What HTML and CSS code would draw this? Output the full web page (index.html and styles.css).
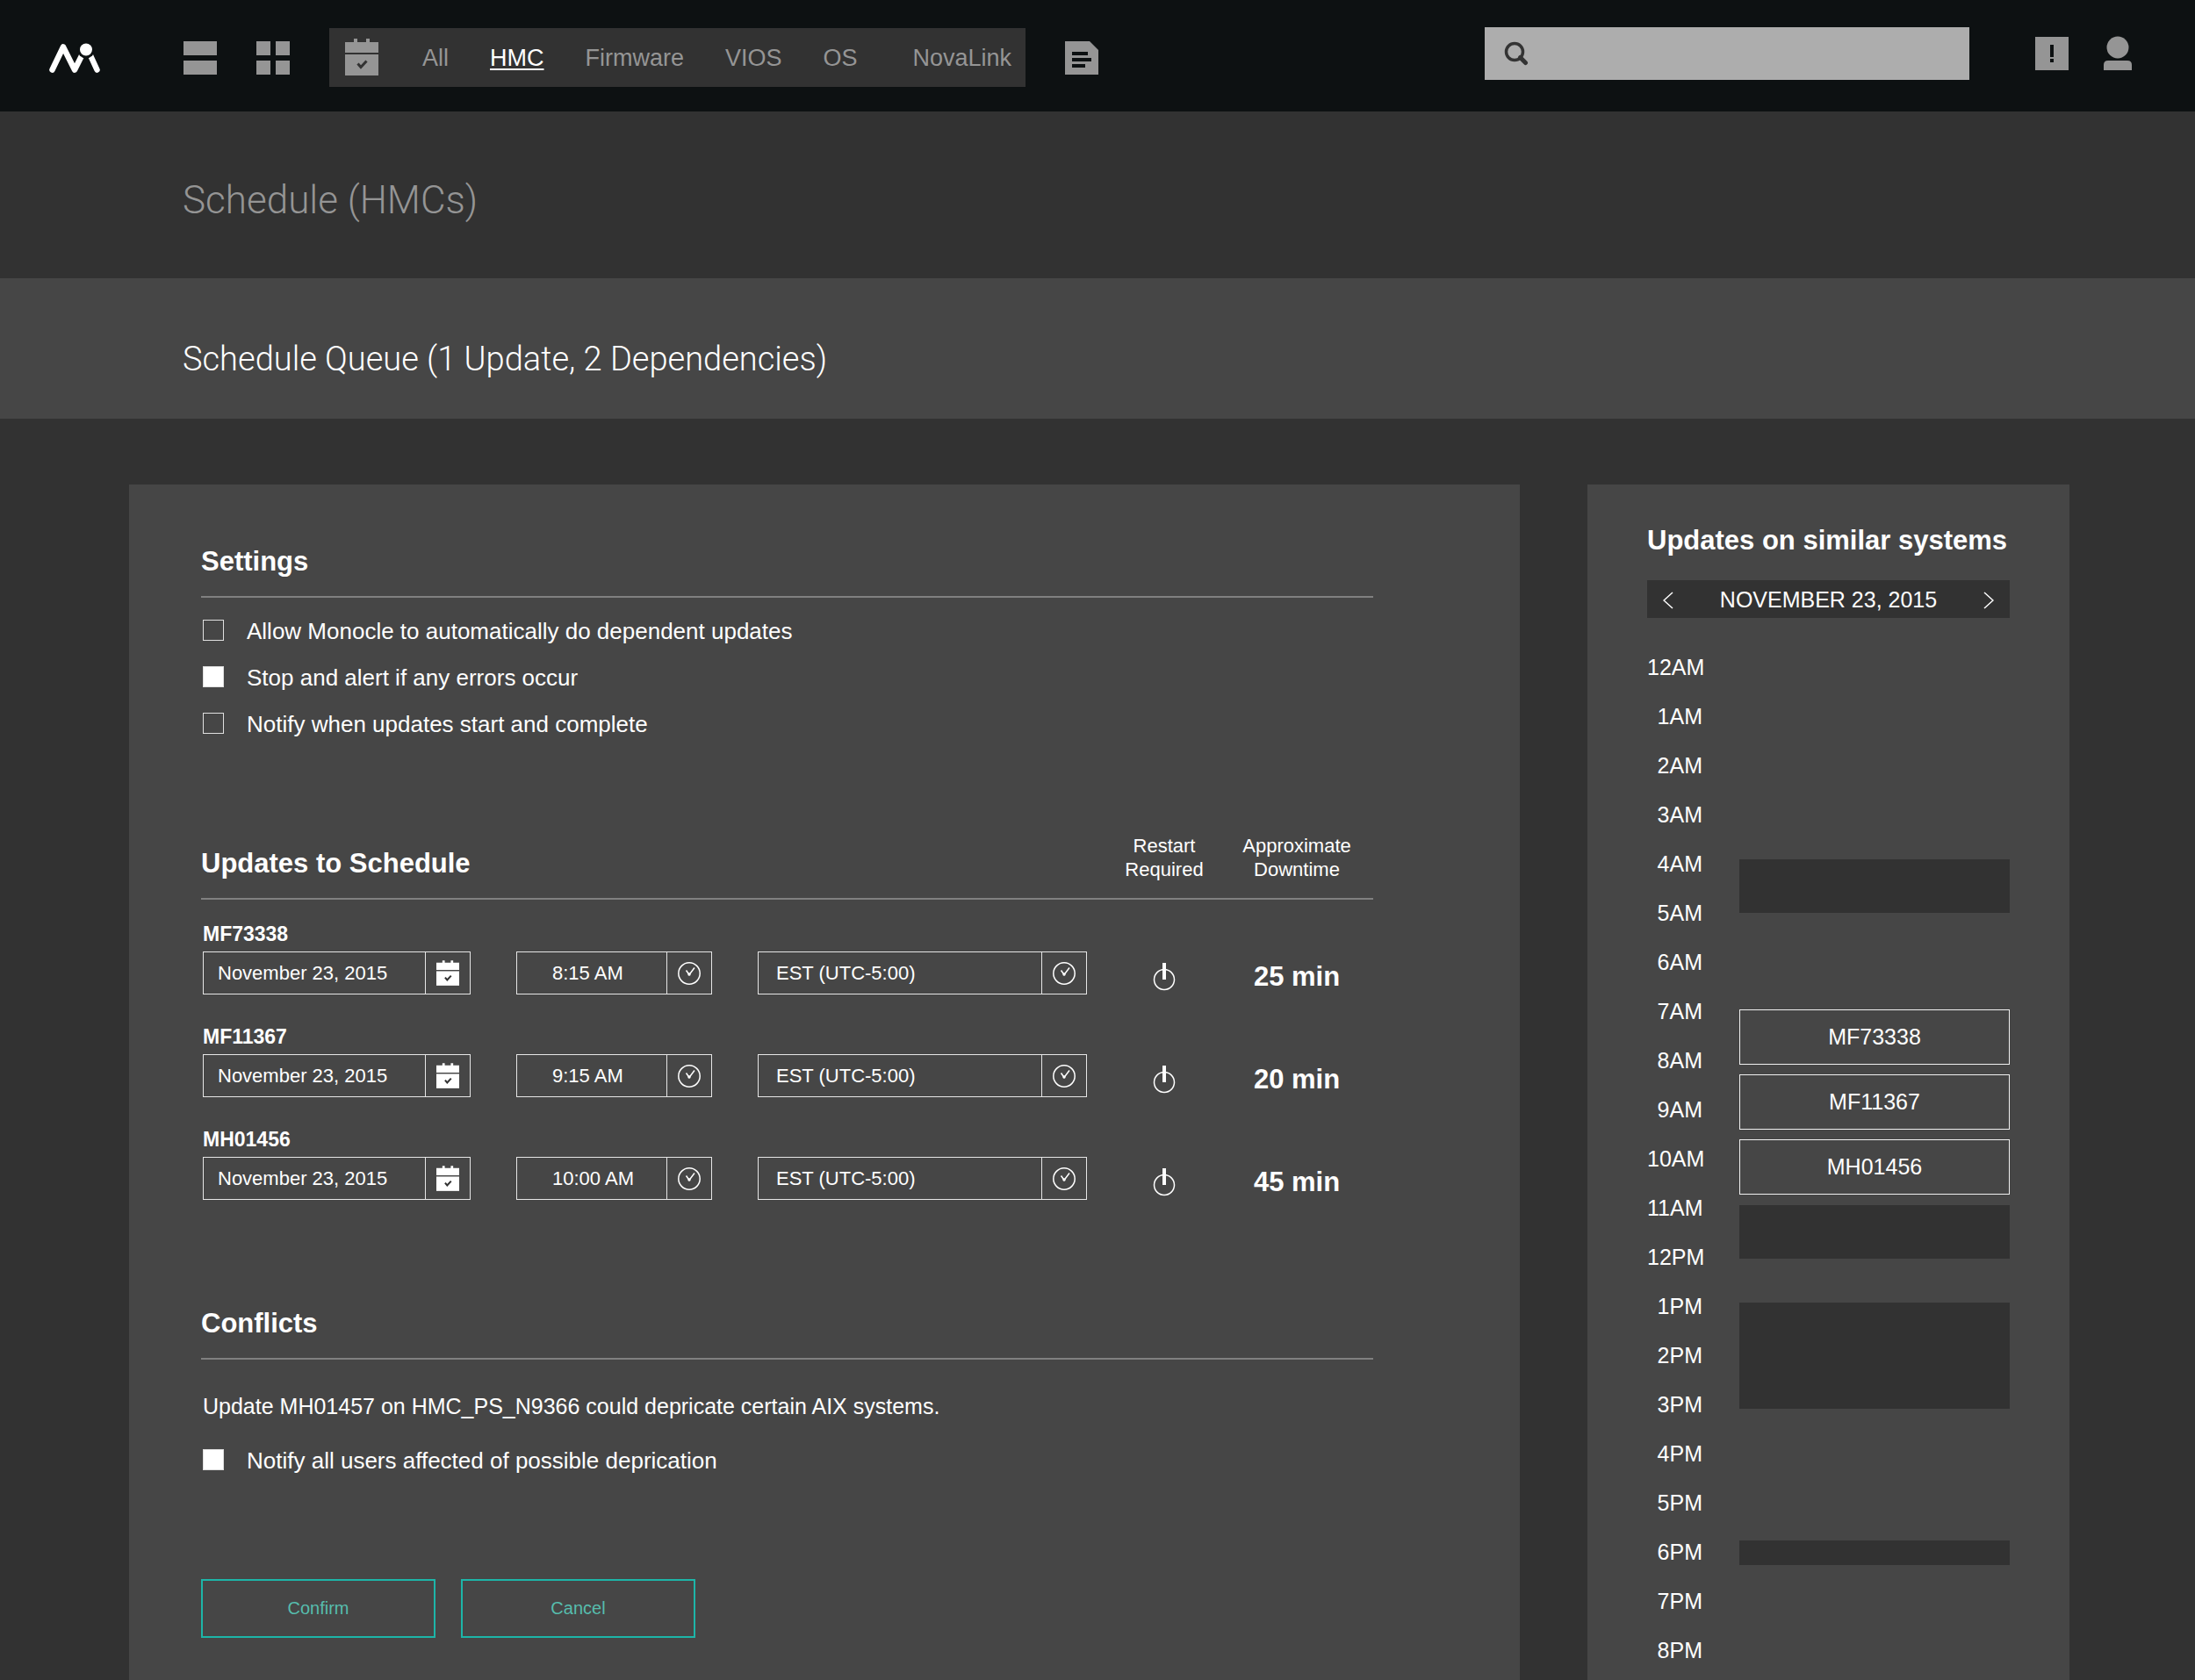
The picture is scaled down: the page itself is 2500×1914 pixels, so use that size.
FILE: index.html
```html
<!DOCTYPE html>
<html lang="en">

<head>
    <meta charset="UTF-8">
    <meta name="viewport" content="width=device-width, initial-scale=1.0">
    <title>Monocle - Schedule (HMCs)</title>
    <link rel="stylesheet" href="styles.css">
</head>

<body>
    <!-- shared icons -->
    <svg class="sprite" aria-hidden="true">
        <symbol id="calendar" viewBox="0 0 38 42">
            <path fill="currentColor" d="M0 4h10V0h4v4h10V0h4v4h10v12H0z" />
            <path fill="currentColor" d="M0 18h38v24H0z" />
            <path class="tick" d="M14.500 28.500l3.500 4 6.500-7" />
        </symbol>
        <symbol id="clock" viewBox="0 0 26 26">
            <circle cx="13" cy="13" r="12.200" fill="none" stroke="currentColor" stroke-width="1.500" />
            <path d="M9.500 9.500l3.500 5 6-8" fill="none" stroke="currentColor" stroke-width="1.500" />
            <circle cx="13" cy="14" r="1.700" fill="currentColor" />
        </symbol>
        <symbol id="power" viewBox="0 0 26 32">
            <circle cx="13" cy="19" r="11.500" fill="none" stroke="currentColor" stroke-width="1.500" />
            <path d="M11 0h4v19h-4z" fill="currentColor" />
        </symbol>
    </svg>

    <header class="topbar">
        <a class="logo" href="#" aria-label="Monocle">
            <svg width="58" height="34" viewBox="0 0 58 34" fill="none" stroke="#fff" stroke-width="6.500" stroke-linecap="round" stroke-linejoin="round">
                <path d="M3.500 30.500L16 4.500l13 26 8-16M46 12l8.500 18.500" />
                <circle cx="42" cy="7.500" r="10" fill="#0d1112" stroke="none" />
                <circle cx="42" cy="7.500" r="7" fill="#fff" stroke="none" />
            </svg>
        </a>
        <nav class="nav">
            <a href="#" aria-label="List">
                <svg width="38" height="38" fill="currentColor"><path d="M0 0h38v16H0zM0 22h38v16H0z" /></svg>
            </a>
            <a href="#" aria-label="Grid">
                <svg width="38" height="38" fill="currentColor"><path d="M0 0h16v16H0zM22 0h16v16H22zM0 22h16v16H0zM22 22h16v16H22z" /></svg>
            </a>
            <div class="subnav">
                <a class="subnav-icon" href="#" aria-label="Schedule"><svg width="38" height="42"><use href="#calendar" /></svg></a>
                <a href="#">All</a>
                <a class="active" href="#">HMC</a>
                <a href="#">Firmware</a>
                <a href="#">VIOS</a>
                <a href="#">OS</a>
                <a class="last" href="#">NovaLink</a>
            </div>
            <a href="#" aria-label="Reports">
                <svg width="38" height="38">
                    <path fill="currentColor" d="M0 0h28l10 10v28H0z" />
                    <path fill="#0d1112" d="M8 12h18v4H8zM8 19h22v4H8zM8 26h15v4H8z" />
                </svg>
            </a>
        </nav>
        <div class="tools">
            <label class="search">
                <svg width="28" height="28" fill="none" stroke="#333">
                    <circle cx="12" cy="12" r="9.500" stroke-width="3.500" />
                    <path d="M18.500 18.500l6 6" stroke-width="5" stroke-linecap="round" />
                </svg>
                <input type="text" aria-label="Search">
            </label>
            <a class="alerts" href="#" aria-label="Alerts">
                <svg width="38" height="38">
                    <path fill="currentColor" d="M0 0h38v38H0z" />
                    <path fill="#0d1112" d="M17 9h4v14h-4zM17 25h4v4h-4z" />
                </svg>
            </a>
            <a href="#" aria-label="Account">
                <svg width="32" height="40" fill="currentColor">
                    <circle cx="16" cy="13" r="12.500" />
                    <path d="M0 39v-6q0-5 5-5h22q5 0 5 5v6z" />
                </svg>
            </a>
        </div>
    </header>

    <h1 class="title">Schedule (HMCs)</h1>
    <h2 class="queue">Schedule Queue (1 Update, 2 Dependencies)</h2>

    <main class="page">
        <form class="panel">
            <section>
                <div class="head">
                    <h3>Settings</h3>
                </div>
                <div class="checks">
                    <label class="check"><input type="checkbox">Allow Monocle to automatically do dependent updates</label>
                    <label class="check"><input type="checkbox" checked>Stop and alert if any errors occur</label>
                    <label class="check"><input type="checkbox">Notify when updates start and complete</label>
                </div>
            </section>

            <section class="updates">
                <div class="head">
                    <h3>Updates to Schedule</h3>
                    <div class="restart">Restart<br>Required</div>
                    <div class="downtime">Approximate<br>Downtime</div>
                </div>
                <div class="rows">
                    <div class="row">
                        <div class="fields">
                            <div class="date">
                                <label for="date1">MF73338</label>
                                <div class="field">
                                    <input id="date1" type="text" value="November 23, 2015">
                                    <button type="button" aria-label="Pick date"><svg width="26" height="29"><use href="#calendar" /></svg></button>
                                </div>
                            </div>
                            <div class="field time">
                                <input type="text" value="8:15 AM" aria-label="Time">
                                <button type="button" aria-label="Pick time"><svg width="26" height="26"><use href="#clock" /></svg></button>
                            </div>
                            <div class="field zone">
                                <select aria-label="Time zone"><option>EST (UTC-5:00)</option></select>
                                <button type="button" aria-label="Pick time zone"><svg width="26" height="26"><use href="#clock" /></svg></button>
                            </div>
                        </div>
                        <div class="restart"><svg width="26" height="32"><use href="#power" /></svg></div>
                        <div class="downtime">25 min</div>
                    </div>
                    <div class="row">
                        <div class="fields">
                            <div class="date">
                                <label for="date2">MF11367</label>
                                <div class="field">
                                    <input id="date2" type="text" value="November 23, 2015">
                                    <button type="button" aria-label="Pick date"><svg width="26" height="29"><use href="#calendar" /></svg></button>
                                </div>
                            </div>
                            <div class="field time">
                                <input type="text" value="9:15 AM" aria-label="Time">
                                <button type="button" aria-label="Pick time"><svg width="26" height="26"><use href="#clock" /></svg></button>
                            </div>
                            <div class="field zone">
                                <select aria-label="Time zone"><option>EST (UTC-5:00)</option></select>
                                <button type="button" aria-label="Pick time zone"><svg width="26" height="26"><use href="#clock" /></svg></button>
                            </div>
                        </div>
                        <div class="restart"><svg width="26" height="32"><use href="#power" /></svg></div>
                        <div class="downtime">20 min</div>
                    </div>
                    <div class="row">
                        <div class="fields">
                            <div class="date">
                                <label for="date3">MH01456</label>
                                <div class="field">
                                    <input id="date3" type="text" value="November 23, 2015">
                                    <button type="button" aria-label="Pick date"><svg width="26" height="29"><use href="#calendar" /></svg></button>
                                </div>
                            </div>
                            <div class="field time">
                                <input type="text" value="10:00 AM" aria-label="Time">
                                <button type="button" aria-label="Pick time"><svg width="26" height="26"><use href="#clock" /></svg></button>
                            </div>
                            <div class="field zone">
                                <select aria-label="Time zone"><option>EST (UTC-5:00)</option></select>
                                <button type="button" aria-label="Pick time zone"><svg width="26" height="26"><use href="#clock" /></svg></button>
                            </div>
                        </div>
                        <div class="restart"><svg width="26" height="32"><use href="#power" /></svg></div>
                        <div class="downtime">45 min</div>
                    </div>
                </div>
            </section>

            <section class="conflicts">
                <div class="head">
                    <h3>Conflicts</h3>
                </div>
                <p>Update MH01457 on HMC_PS_N9366 could depricate certain AIX systems.</p>
                <label class="check"><input type="checkbox" checked>Notify all users affected of possible deprication</label>
            </section>

            <div class="actions">
                <button type="submit">Confirm</button>
                <button type="button">Cancel</button>
            </div>
        </form>

        <aside class="panel side">
            <h3>Updates on similar systems</h3>
            <div class="day">
                <button type="button" aria-label="Previous day">
                    <svg width="12" height="20" fill="none" stroke="currentColor" stroke-width="1.500"><path d="M11 1L1 10l10 9" /></svg>
                </button>
                <span>NOVEMBER 23, 2015</span>
                <button type="button" aria-label="Next day">
                    <svg width="12" height="20" fill="none" stroke="currentColor" stroke-width="1.500"><path d="M1 1l10 9-10 9" /></svg>
                </button>
            </div>
            <div class="timeline">
                <ol class="hours">
                    <li>12AM</li>
                    <li>1AM</li>
                    <li>2AM</li>
                    <li>3AM</li>
                    <li>4AM</li>
                    <li>5AM</li>
                    <li>6AM</li>
                    <li>7AM</li>
                    <li>8AM</li>
                    <li>9AM</li>
                    <li>10AM</li>
                    <li>11AM</li>
                    <li>12PM</li>
                    <li>1PM</li>
                    <li>2PM</li>
                    <li>3PM</li>
                    <li>4PM</li>
                    <li>5PM</li>
                    <li>6PM</li>
                    <li>7PM</li>
                    <li>8PM</li>
                </ol>
                <!-- --wait: free time before the slot, --length: how long it runs -->
                <ol class="slots">
                    <li class="busy" style="--wait: 247px; --length: 61px"></li>
                    <li style="--wait: 110px; --length: 63px">MF73338</li>
                    <li style="--wait: 11px; --length: 63px">MF11367</li>
                    <li style="--wait: 11px; --length: 63px">MH01456</li>
                    <li class="busy" style="--wait: 12px; --length: 61px"></li>
                    <li class="busy" style="--wait: 50px; --length: 121px"></li>
                    <li class="busy" style="--wait: 150px; --length: 28px"></li>
                </ol>
            </div>
        </aside>
    </main>
</body>

</html>
```
FILE: styles.css
```css
* {
    box-sizing: border-box;
    margin: 0;
    padding: 0;
}

body {
    display: flex;
    flex-direction: column;
    min-height: 100vh;
    background-color: #323232;
    color: #fff;
    font-family: "Liberation Sans", Arial, sans-serif;
    font-size: 25px;
}

a {
    color: inherit;
    text-decoration: none;
}

svg {
    display: block;
}

ol {
    list-style: none;
}

input, select, button {
    border: 0;
    background: none;
    color: inherit;
    font-family: inherit;
    font-size: 22px;
}

.sprite {
    position: absolute;
    width: 0;
    height: 0;
}

.tick {
    fill: none;
    stroke: #323232;
    stroke-width: 3;
}

/* top bar */

.topbar {
    display: flex;
    align-items: center;
    height: 127px;
    padding: 4px 72px 0 56px;
    background-color: #0d1112;
    color: #959595;
}

.nav {
    display: flex;
    align-items: center;
    gap: 45px;
    margin-left: 95px;
}

.subnav {
    display: flex;
    align-items: center;
    gap: 47px;
    height: 67px;
    padding: 2px 16px 0 18px;
    background-color: #323232;
    font-size: 27px;
}

.subnav-icon {
    margin-right: 3px;
    padding-bottom: 4px;
}

.active {
    color: #fff;
    text-decoration: underline;
    text-decoration-thickness: 2px;
    text-underline-offset: 3px;
}

.last {
    margin-left: 16px;
}

.tools {
    display: flex;
    align-items: center;
    margin: 0 0 9px auto;
}

.search {
    display: flex;
    align-items: center;
    width: 552px;
    height: 60px;
    padding: 0 22px;
    background-color: #adadad;
    color: #323232;
}

.search input {
    flex: 1;
    margin-left: 16px;
}

.alerts {
    margin: 0 40px 0 75px;
}

/* page titles */

.title {
    padding: 71px 208px 59px;
    color: #959595;
    font-family: Roboto, "Liberation Sans", sans-serif;
    font-size: 44px;
    font-weight: 300;
    line-height: 60px;
}

.queue {
    padding: 67px 208px 43px;
    background-color: #464646;
    font-family: Roboto, "Liberation Sans", sans-serif;
    font-size: 38px;
    font-weight: 300;
    line-height: 50px;
}

.page {
    display: grid;
    flex: 1;
    grid-template-columns: 1fr 549px;
    gap: 77px;
    padding: 75px 143px 0 147px;
}

.panel {
    padding: 68px 167px 0 82px;
    background-color: #464646;
}

h3 {
    font-size: 31px;
    line-height: 40px;
}

.head {
    display: flex;
    align-items: flex-end;
    padding-bottom: 19px;
    border-bottom: 2px solid #808080;
}

.head h3 {
    flex: 1;
}

/* check boxes */

.checks {
    padding-top: 12px;
}

.check {
    display: flex;
    align-items: center;
    height: 53px;
    padding-left: 2px;
    font-size: 26px;
}

.check input {
    appearance: none;
    width: 24px;
    height: 24px;
    margin: 0 26px 3px 0;
    border: 1px solid #e0e0e0;
}

.check input:checked {
    background-color: #fff;
}

/* updates */

.updates {
    margin-top: 98px;
}

.restart {
    width: 128px;
    text-align: center;
}

.downtime {
    width: 174px;
    text-align: center;
}

.head .restart, .head .downtime {
    font-size: 22px;
    line-height: 27px;
}

.rows {
    display: flex;
    flex-direction: column;
    gap: 33px;
    padding: 24px 0 0 2px;
}

.row {
    display: flex;
    align-items: flex-end;
}

.row .restart, .row .downtime {
    display: flex;
    align-items: center;
    justify-content: center;
    height: 49px;
    padding-top: 8px;
    font-size: 31px;
    font-weight: bold;
}

.fields {
    display: flex;
    flex: 1;
    align-items: flex-end;
    gap: 52px;
    margin-right: 24px;
}

.date {
    width: 305px;
}

.date label {
    display: block;
    margin-bottom: 5px;
    font-size: 23px;
    font-weight: bold;
    line-height: 30px;
}

.field {
    display: flex;
    height: 49px;
    border: 1px solid #e6e6e6;
}

.field input, .field select {
    appearance: none;
    flex: 1;
    min-width: 0;
    padding-left: 16px;
}

.field button {
    display: flex;
    align-items: center;
    justify-content: center;
    width: 51px;
    border-left: 1px solid #e6e6e6;
}

.time {
    width: 223px;
}

.time input {
    padding-left: 40px;
}

.zone {
    flex: 1;
}

.zone select {
    padding-left: 20px;
}

/* conflicts */

.conflicts {
    margin-top: 121px;
}

.conflicts p {
    margin: 35px 0 18px;
    padding-left: 2px;
    line-height: 36px;
}

.actions {
    display: flex;
    gap: 29px;
    margin-top: 108px;
}

.actions button {
    width: 267px;
    height: 67px;
    border: 2px solid #1db5a8;
    color: #56bdad;
    font-size: 20px;
}

/* similar systems */

.side {
    padding: 44px 68px 0;
}

.day {
    display: flex;
    align-items: center;
    justify-content: space-between;
    height: 43px;
    margin: 25px 0 28px;
    padding: 2px 18px 0;
    background-color: #323232;
}

.timeline {
    display: flex;
    gap: 42px;
}

.hours {
    width: 63px;
    line-height: 56px;
    text-align: right;
}

.slots {
    flex: 1;
}

.slots li {
    display: flex;
    align-items: center;
    justify-content: center;
    height: var(--length);
    margin-top: var(--wait);
    border: 1px solid #f0f0f0;
}

.slots .busy {
    border: 0;
    background-color: #323232;
}
```
